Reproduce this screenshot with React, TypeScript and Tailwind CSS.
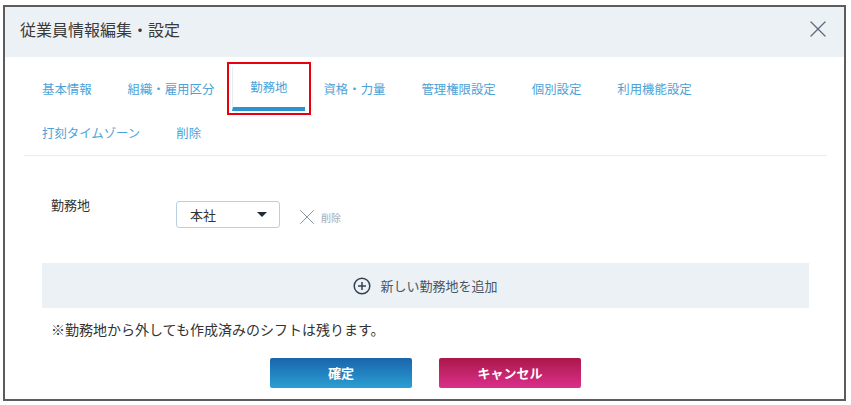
import { X } from "lucide-react"

const tabs = [
    "基本情報",
    "組織・雇用区分",
    "勤務地",
    "資格・力量",
    "管理権限設定",
    "個別設定",
    "利用機能設定",
    "打刻タイムゾーン",
    "削除",
]

const active = "勤務地"

export default function App() {
    return (
        <div className="h-[405px] w-[851px] bg-white pl-[3px] pt-[5px] font-['Noto_Sans_CJK_JP',sans-serif]">
            <div className="flex h-[396px] w-[843px] flex-col border-2 border-[#5c5c5c] bg-white">
                {/* header */}
                <div className="flex h-[50px] shrink-0 items-center justify-between bg-[#ecf1f6] pb-[6px] pl-[15px] pr-[12px]">
                    <h1 className="text-[16px] leading-[20px] text-[#3a3a3a]">従業員情報編集・設定</h1>
                    <X className="h-[28px] w-[28px] text-[#5d6b79]" strokeWidth={1.1} />
                </div>

                {/* tabs */}
                <div className="ml-[19px] mr-[17px] mt-[10px] flex flex-wrap border-b border-[#eaeef2]">
                    {tabs.map((t) =>
                        t === active ? (
                            <div
                                key={t}
                                className="relative flex h-[44px] items-center border-b-4 border-l border-b-[#2a94cf] border-l-[#e6edf4] pl-[17px] pr-[18px] text-[12.4px] text-[#4ba2d7]"
                            >
                                {t}
                                <span className="pointer-events-none absolute -bottom-[8px] -left-[6px] -right-[6px] -top-[5px] border-2 border-[#e8000f]" />
                            </div>
                        ) : (
                            <div key={t} className="flex h-[44px] items-center px-[18px] text-[12.4px] text-[#4ba2d7]">
                                {t}
                            </div>
                        )
                    )}
                </div>

                {/* body */}
                <div className="ml-[37px] mr-[35px] flex flex-col">
                    <div className="mt-[45px] flex items-start">
                        <div className="-mt-[3px] w-[134px] pl-[9px] text-[13px] leading-[14px] text-[#333]">勤務地</div>
                        <div className="flex h-[27px] w-[104px] items-center justify-between rounded-[3px] border border-[#b9cfe2] pl-[13px] pr-[12px]">
                            <span className="text-[13px] text-[#333]">本社</span>
                            <span className="h-0 w-0 border-x-[5px] border-t-[5px] border-x-transparent border-t-[#1f2a36]" />
                        </div>
                        <div className="ml-[14px] mt-[3px] flex items-center gap-[1px]">
                            <X className="h-[26px] w-[26px] text-[#8796a4]" strokeWidth={0.9} />
                            <span className="text-[10px] text-[#a3abb3]">削除</span>
                        </div>
                    </div>

                    <div className="mt-[33px] flex h-[45px] items-center justify-center gap-[9px] bg-[#ecf1f6]">
                        <svg width="18" height="18" viewBox="0 0 18 18" fill="none" stroke="#34414f" strokeWidth="1.5">
                            <circle cx="9" cy="9" r="7.8" />
                            <path d="M9 5v8M5 9h8" />
                        </svg>
                        <span className="text-[13px] text-[#4a5561]">新しい勤務地を追加</span>
                    </div>

                    <p className="mt-[11px] pl-[9px] text-[14px] leading-[20px] text-[#333]">
                        ※勤務地から外しても作成済みのシフトは残ります。
                    </p>

                    <div className="mt-[19px] flex justify-center gap-[27px]">
                        <button className="h-[30px] w-[142px] rounded-[2px] bg-gradient-to-b from-[#1b64ab] to-[#2b9fd3] text-[13px] font-bold text-white">
                            確定
                        </button>
                        <button className="h-[30px] w-[142px] rounded-[2px] bg-gradient-to-b from-[#ab1747] to-[#db2f8d] text-[13px] font-bold text-white">
                            キャンセル
                        </button>
                    </div>
                </div>
            </div>
        </div>
    )
}
